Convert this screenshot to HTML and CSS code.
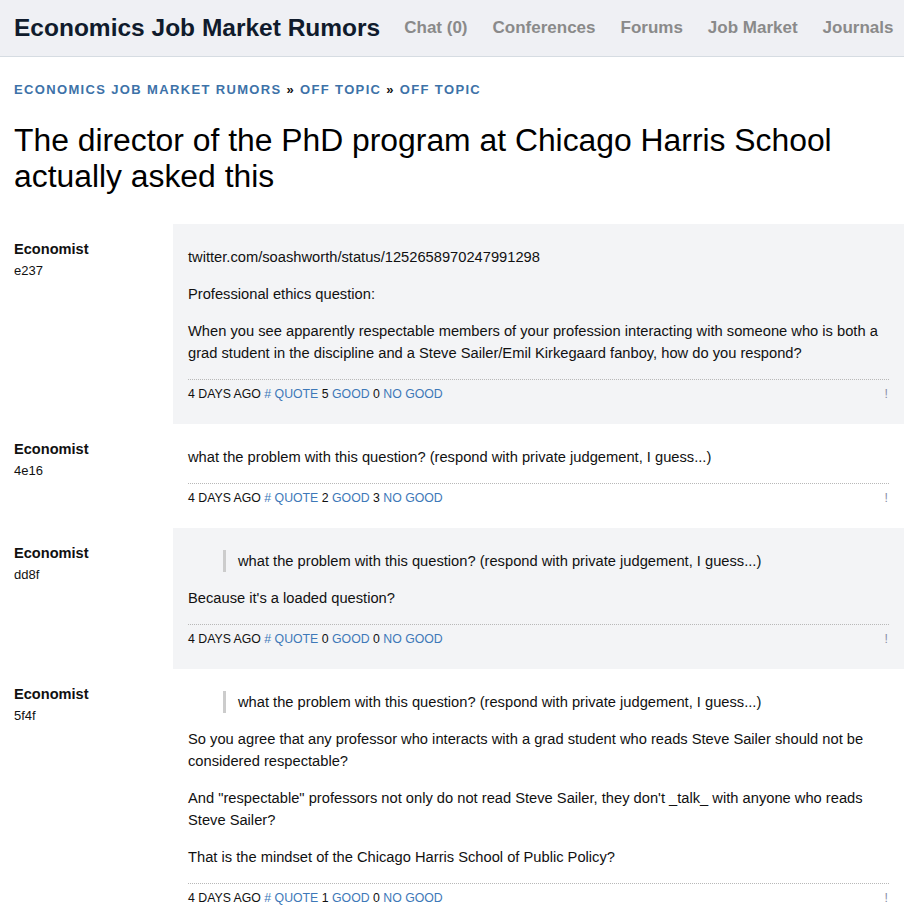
FILE: index.html
```html
<!DOCTYPE html>
<html>
<head>
<meta charset="utf-8">
<title>Economics Job Market Rumors</title>
<link rel="stylesheet" href="styles.css">
</head>
<body>
<header class="topbar">
  <a class="brand" href="#">Economics Job Market Rumors</a>
  <nav class="nav">
    <a href="#">Chat (0)</a>
    <a href="#">Conferences</a>
    <a href="#">Forums</a>
    <a href="#">Job Market</a>
    <a href="#">Journals</a>
  </nav>
</header>
<main class="main">
  <div class="crumbs"><a href="#">Economics Job Market Rumors</a> » <a href="#">Off Topic</a> » <a href="#">Off Topic</a></div>
  <h1 class="title">The director of the PhD program at Chicago Harris School actually asked this</h1>

  <div class="posts">
    <article class="post shaded">
      <div class="author"><div class="name">Economist</div><div class="uid">e237</div></div>
      <div class="body">
        <p>twitter.com/soashworth/status/1252658970247991298</p>
        <p>Professional ethics question:</p>
        <p>When you see apparently respectable members of your profession interacting with someone who is both a grad student in the discipline and a Steve Sailer/Emil Kirkegaard fanboy, how do you respond?</p>
        <div class="meta"><span>4 days ago <a href="#"># </a><a href="#">Quote</a> 5 <a href="#">Good</a> 0 <a href="#">No Good</a></span><a class="flag" href="#">!</a></div>
      </div>
    </article>

    <article class="post">
      <div class="author"><div class="name">Economist</div><div class="uid">4e16</div></div>
      <div class="body">
        <p>what the problem with this question? (respond with private judgement, I guess...)</p>
        <div class="meta"><span>4 days ago <a href="#"># </a><a href="#">Quote</a> 2 <a href="#">Good</a> 3 <a href="#">No Good</a></span><a class="flag" href="#">!</a></div>
      </div>
    </article>

    <article class="post shaded">
      <div class="author"><div class="name">Economist</div><div class="uid">dd8f</div></div>
      <div class="body">
        <blockquote>what the problem with this question? (respond with private judgement, I guess...)</blockquote>
        <p>Because it's a loaded question?</p>
        <div class="meta"><span>4 days ago <a href="#"># </a><a href="#">Quote</a> 0 <a href="#">Good</a> 0 <a href="#">No Good</a></span><a class="flag" href="#">!</a></div>
      </div>
    </article>

    <article class="post">
      <div class="author"><div class="name">Economist</div><div class="uid">5f4f</div></div>
      <div class="body">
        <blockquote>what the problem with this question? (respond with private judgement, I guess...)</blockquote>
        <p>So you agree that any professor who interacts with a grad student who reads Steve Sailer should not be considered respectable?</p>
        <p>And "respectable" professors not only do not read Steve Sailer, they don't _talk_ with anyone who reads Steve Sailer?</p>
        <p>That is the mindset of the Chicago Harris School of Public Policy?</p>
        <div class="meta"><span>4 days ago <a href="#"># </a><a href="#">Quote</a> 1 <a href="#">Good</a> 0 <a href="#">No Good</a></span><a class="flag" href="#">!</a></div>
      </div>
    </article>
  </div>
</main>
</body>
</html>
```

FILE: styles.css
```css
* { box-sizing: border-box; }
html, body { margin: 0; padding: 0; }
body {
  font-family: "Liberation Sans", Arial, sans-serif;
  color: #111;
  background: #fff;
}
a { text-decoration: none; }

.topbar {
  display: flex;
  align-items: center;
  height: 57px;
  padding: 0 14px;
  background: #eff0f4;
  border-bottom: 1px solid #d6dce2;
  white-space: nowrap;
  overflow: hidden;
}
.brand {
  font-size: 24.5px;
  font-weight: bold;
  color: #101b2c;
  margin-right: 24px;
}
.nav { display: flex; gap: 25px; }
.nav a {
  font-size: 17px;
  font-weight: bold;
  color: #8a8a8a;
}

.main { padding: 0 0 0 14px; }
.crumbs {
  margin-top: 25px;
  font-size: 13px;
  font-weight: bold;
  letter-spacing: 1.35px;
  text-transform: uppercase;
  color: #111;
  line-height: 16px;
}
.crumbs a { color: #3d72a8; }

.title {
  font-size: 31.85px;
  font-weight: normal;
  line-height: 36px;
  margin: 24px 14px 30px 0;
  color: #000;
}

.posts { margin-left: -14px; }
.post { display: flex; }
.post.shaded .body { background: #f3f4f6; }
.author {
  width: 173px;
  flex: none;
  padding: 17px 0 0 14px;
}
.name {
  font-size: 14.6px;
  font-weight: bold;
  line-height: 16px;
}
.uid {
  font-size: 13px;
  line-height: 16px;
  margin-top: 6px;
}
.body {
  flex: 1;
  padding: 22px 15px 22px 15px;
  font-size: 14.7px;
  line-height: 22px;
  color: #111;
}
.body p { margin: 0 0 15px; }
.body blockquote {
  margin: 0 0 15px 35px;
  padding-left: 12px;
  border-left: 3px solid #cccccc;
}
.meta {
  display: flex;
  justify-content: space-between;
  border-top: 1px dotted #b8b8b8;
  padding-top: 6px;
  font-size: 12.3px;
  line-height: 16px;
  text-transform: uppercase;
  color: #111;
}
.meta a { color: #3d78b8; }
.meta .flag { color: #8a8fa8; padding-right: 1px; }
```
